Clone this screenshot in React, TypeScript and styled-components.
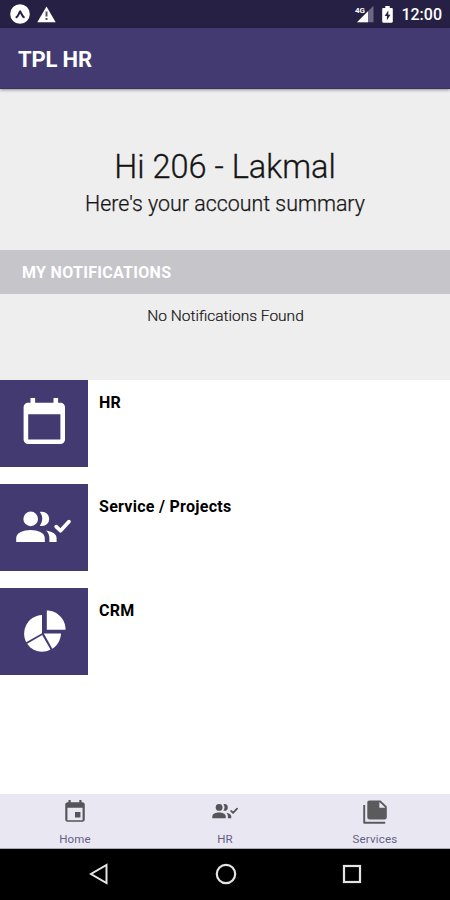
import React from "react";
import styled, { createGlobalStyle } from "styled-components";

const Global = createGlobalStyle`
  * { box-sizing: border-box; }
  body { margin: 0; background: #fff; }
`;

const Screen = styled.div`
  width: 450px;
  height: 900px;
  display: flex;
  flex-direction: column;
  overflow: hidden;
  background: #fff;
  color: #151515;
  font-family: Roboto, "Liberation Sans", sans-serif;
`;

const StatusBar = styled.div`
  height: 28px;
  flex: none;
  display: flex;
  align-items: center;
  justify-content: space-between;
  padding: 0 8px 0 10px;
  background: #272045;
`;

const StatusGroup = styled.div<{ $gap: number }>`
  display: flex;
  align-items: center;
  gap: ${(p) => p.$gap}px;
`;

const Clock = styled.span`
  color: #fff;
  font-size: 16px;
  font-weight: 500;
  line-height: 28px;
  padding-top: 2px;
`;

const AppBar = styled.header`
  height: 61px;
  flex: none;
  display: flex;
  align-items: center;
  padding: 3px 18px 0;
  background: #433a72;
  border-bottom: 1px solid #393064;
  box-shadow: 0 1px 3px rgba(0, 0, 0, 0.4);
  z-index: 1;
`;

const Title = styled.h1`
  margin: 0;
  color: #fff;
  font-size: 22px;
  font-weight: 700;
  letter-spacing: -0.15px;
`;

const Summary = styled.section`
  height: 291px;
  flex: none;
  display: flex;
  flex-direction: column;
  align-items: center;
  background: #eee;
`;

const Greeting = styled.h2`
  margin: 58px 0 0;
  font-size: 32.5px;
  line-height: 41px;
  font-weight: 300;
  -webkit-text-stroke: 0.3px currentColor;
  white-space: nowrap;
`;

const Subtitle = styled.p`
  margin: 0;
  height: 62px;
  font-size: 21.4px;
  line-height: 31px;
  font-weight: 300;
  -webkit-text-stroke: 0.25px currentColor;
  white-space: nowrap;
`;

const SectionBar = styled.div`
  width: 100%;
  height: 44px;
  padding-left: 22px;
  background: #c6c5ca;
  color: #fff;
  font-size: 16px;
  line-height: 45px;
  font-weight: 700;
  letter-spacing: 0.3px;
`;

const Empty = styled.p`
  margin: 12px 0 0;
  padding-left: 1px;
  font-size: 15.5px;
  line-height: 20px;
  font-weight: 300;
  -webkit-text-stroke: 0.2px currentColor;
`;

const Menu = styled.main`
  flex: 1;
  display: flex;
  flex-direction: column;
  gap: 17px;
`;

const MenuRow = styled.div`
  display: flex;
  height: 87px;
  gap: 11px;
`;

const Tile = styled.div`
  width: 88px;
  height: 87px;
  background: #433a72;
  svg { display: block; }
`;

const MenuLabel = styled.span`
  padding-top: 13px;
  color: #000;
  font-size: 16px;
  line-height: 20px;
  font-weight: 700;
  letter-spacing: 0.28px;
`;

const Tabs = styled.nav`
  height: 55px;
  flex: none;
  display: grid;
  grid-template-columns: repeat(3, 1fr);
  background: #e9e7f2;
  border-bottom: 1px solid #aaa9b2;
`;

const Tab = styled.div`
  display: flex;
  flex-direction: column;
  align-items: center;
  padding-top: 5px;
  svg { display: block; }
`;

const TabLabel = styled.span`
  margin-top: 7px;
  color: #655f88;
  font-size: 11.5px;
  line-height: 14px;
  letter-spacing: 0.2px;
`;

const SystemNav = styled.div`
  height: 51px;
  flex: none;
  display: flex;
  align-items: center;
  justify-content: space-between;
  padding: 0 86px 1px 87px;
  background: #000;
`;

const CalendarArt = () => (
  <svg width="88" height="87" viewBox="0 0 88 87" fill="#fff">
    <path
      transform="translate(16.7 15.8) scale(2.3)"
      d="M19 19H5V8h14M16 1v2H8V1H6v2H5c-1.11 0-2 .89-2 2v14a2 2 0 0 0 2 2h14a2 2 0 0 0 2-2V5c0-1.11-.9-2-2-2h-1V1"
    />
  </svg>
);

const PeoplePaths = () => (
  <>
    <circle cx="30.7" cy="34.9" r="7.3" />
    <path d="M39.8 28.1c.7-.3 1.4-.4 2.2-.4a7.2 7.2 0 0 1 0 14.4c-.8 0-1.5-.1-2.2-.4 3.3-4.1 3.3-9.5 0-13.6z" />
    <path d="M16.2 58v-3.8c0-5.5 7.2-8.2 14.3-8.2s14.3 2.7 14.3 8.2V58z" />
    <path d="M46 46.6c5.8.8 10.6 3.4 10.6 7.6V58h-7.2v-3.8c0-3.1-1.2-5.6-3.4-7.6z" />
    <path d="M56.2 42.6l4.3 4.2 8.5-9.2" fill="none" stroke="currentColor" strokeWidth="3.7" strokeLinecap="round" strokeLinejoin="round" />
  </>
);

const PeopleArt = () => (
  <svg width="88" height="87" viewBox="0 0 88 87" fill="currentColor" color="#fff">
    <PeoplePaths />
  </svg>
);

const PieArt = () => (
  <svg width="88" height="87" viewBox="0 0 88 87" fill="#fff">
    <path d="M46.8 41.8V22.5c10.3 0 18.8 8.7 18.8 19.3z" />
    <path d="M42 27v18.2L26.2 54.2C20.5 43.4 27 27.8 42 27z" />
    <path d="M42.2 47l8.3 14.6C42.6 66 32.3 63.6 27.2 55.8z" />
    <path d="M43.8 45.6H61c-.2 6.3-3.6 12.2-8.7 15.2z" />
  </svg>
);

const HomeIcon = () => (
  <svg width="26" height="26" viewBox="0 0 24 24" fill="#555459">
    <path d="M19 19.5H5V8h14M16 1v2H8V1H6v2H5c-1.1 0-2 .9-2 2v14c0 1.1.9 2 2 2h14c1.1 0 2-.9 2-2V5c0-1.1-.9-2-2-2h-1V1m-1 11h-5v5h5z" />
  </svg>
);

const TeamIcon = () => (
  <svg width="26" height="26" viewBox="15.5 17 55.5 55.5" fill="currentColor" color="#555459">
    <PeoplePaths />
  </svg>
);

const ServicesIcon = () => (
  <svg width="26" height="26" viewBox="0 0 26 26" fill="#5b5b5d">
    <path d="M7.4 1.5h11.2l6.2 6v10.8c0 1.2-.9 2.1-2.1 2.1H7.4c-1.2 0-2.1-.9-2.1-2.1V3.6c0-1.2.9-2.1 2.1-2.1z" />
    <path d="M17.4 3v5.8h6z" fill="#e9e7f2" />
    <path d="M2.2 6v17.8h21" fill="none" stroke="#5b5b5d" strokeWidth="1.9" strokeLinejoin="round" />
  </svg>
);

const ArrowBadge = () => (
  <svg width="20" height="20" viewBox="0 0 20 20">
    <circle cx="10" cy="10" r="9.8" fill="#fff" />
    <path d="M6.5 13.2c1.8-1 2.3-4 3.6-5.8 1.3 1.8 2 4.8 3.7 5.8" fill="none" stroke="#272045" strokeWidth="2" strokeLinecap="round" strokeLinejoin="round" />
  </svg>
);

const Warning = () => (
  <svg width="19" height="17" viewBox="0 0 19 17">
    <path d="M9.5.5L18.7 16.2H.3z" fill="#fff" />
    <path d="M9.5 5.5v5M9.5 12v2" stroke="#555062" strokeWidth="2" />
  </svg>
);

const SignalText = styled.text`
  font: 700 8px Roboto, sans-serif;
  fill: #fff;
`;

const Signal = () => (
  <svg width="20" height="18" viewBox="0 0 20 18">
    <path d="M19.5.8v16.5H3z" fill="#6c6782" />
    <path d="M14 6.3v11H3z" fill="#fff" />
    <SignalText x="1" y="7.5">4G</SignalText>
  </svg>
);

const Battery = () => (
  <svg width="11" height="17" viewBox="0 0 11 17">
    <path d="M3.3 0h4.4v2h2c.7 0 1.1.5 1.1 1.1v12.5c0 .7-.5 1.2-1.1 1.2H1.3c-.7 0-1.1-.5-1.1-1.2V3.1C.2 2.5.6 2 1.3 2h2z" fill="#fff" />
    <path d="M6.3 4.5L2.7 10h2.2v4.2L8.5 8.7H6.3z" fill="#272045" />
  </svg>
);

const rows = [
  { label: "HR", Art: CalendarArt },
  { label: "Service / Projects", Art: PeopleArt },
  { label: "CRM", Art: PieArt },
];

const tabs = [
  { label: "Home", Icon: HomeIcon },
  { label: "HR", Icon: TeamIcon },
  { label: "Services", Icon: ServicesIcon },
];

export default function App() {
  return (
    <Screen>
      <Global />
      <StatusBar>
        <StatusGroup $gap={7}>
          <ArrowBadge />
          <Warning />
        </StatusGroup>
        <StatusGroup $gap={8}>
          <Signal />
          <Battery />
          <Clock>12:00</Clock>
        </StatusGroup>
      </StatusBar>
      <AppBar>
        <Title>TPL HR</Title>
      </AppBar>
      <Summary>
        <Greeting>Hi 206 - Lakmal</Greeting>
        <Subtitle>Here's your account summary</Subtitle>
        <SectionBar>MY NOTIFICATIONS</SectionBar>
        <Empty>No Notifications Found</Empty>
      </Summary>
      <Menu>
        {rows.map(({ label, Art }) => (
          <MenuRow key={label}>
            <Tile><Art /></Tile>
            <MenuLabel>{label}</MenuLabel>
          </MenuRow>
        ))}
      </Menu>
      <Tabs>
        {tabs.map(({ label, Icon }) => (
          <Tab key={label}>
            <Icon />
            <TabLabel>{label}</TabLabel>
          </Tab>
        ))}
      </Tabs>
      <SystemNav>
        <svg width="24" height="24" viewBox="0 0 24 24" fill="none" stroke="#e4e4e4" strokeWidth="2">
          <path d="M19.5 3v18L4 12z" />
        </svg>
        <svg width="24" height="24" viewBox="0 0 24 24" fill="none" stroke="#e4e4e4" strokeWidth="2.2">
          <circle cx="12" cy="12" r="9.2" />
        </svg>
        <svg width="24" height="24" viewBox="0 0 24 24" fill="none" stroke="#e4e4e4" strokeWidth="2.2">
          <rect x="4" y="4" width="16" height="16" />
        </svg>
      </SystemNav>
    </Screen>
  );
}
